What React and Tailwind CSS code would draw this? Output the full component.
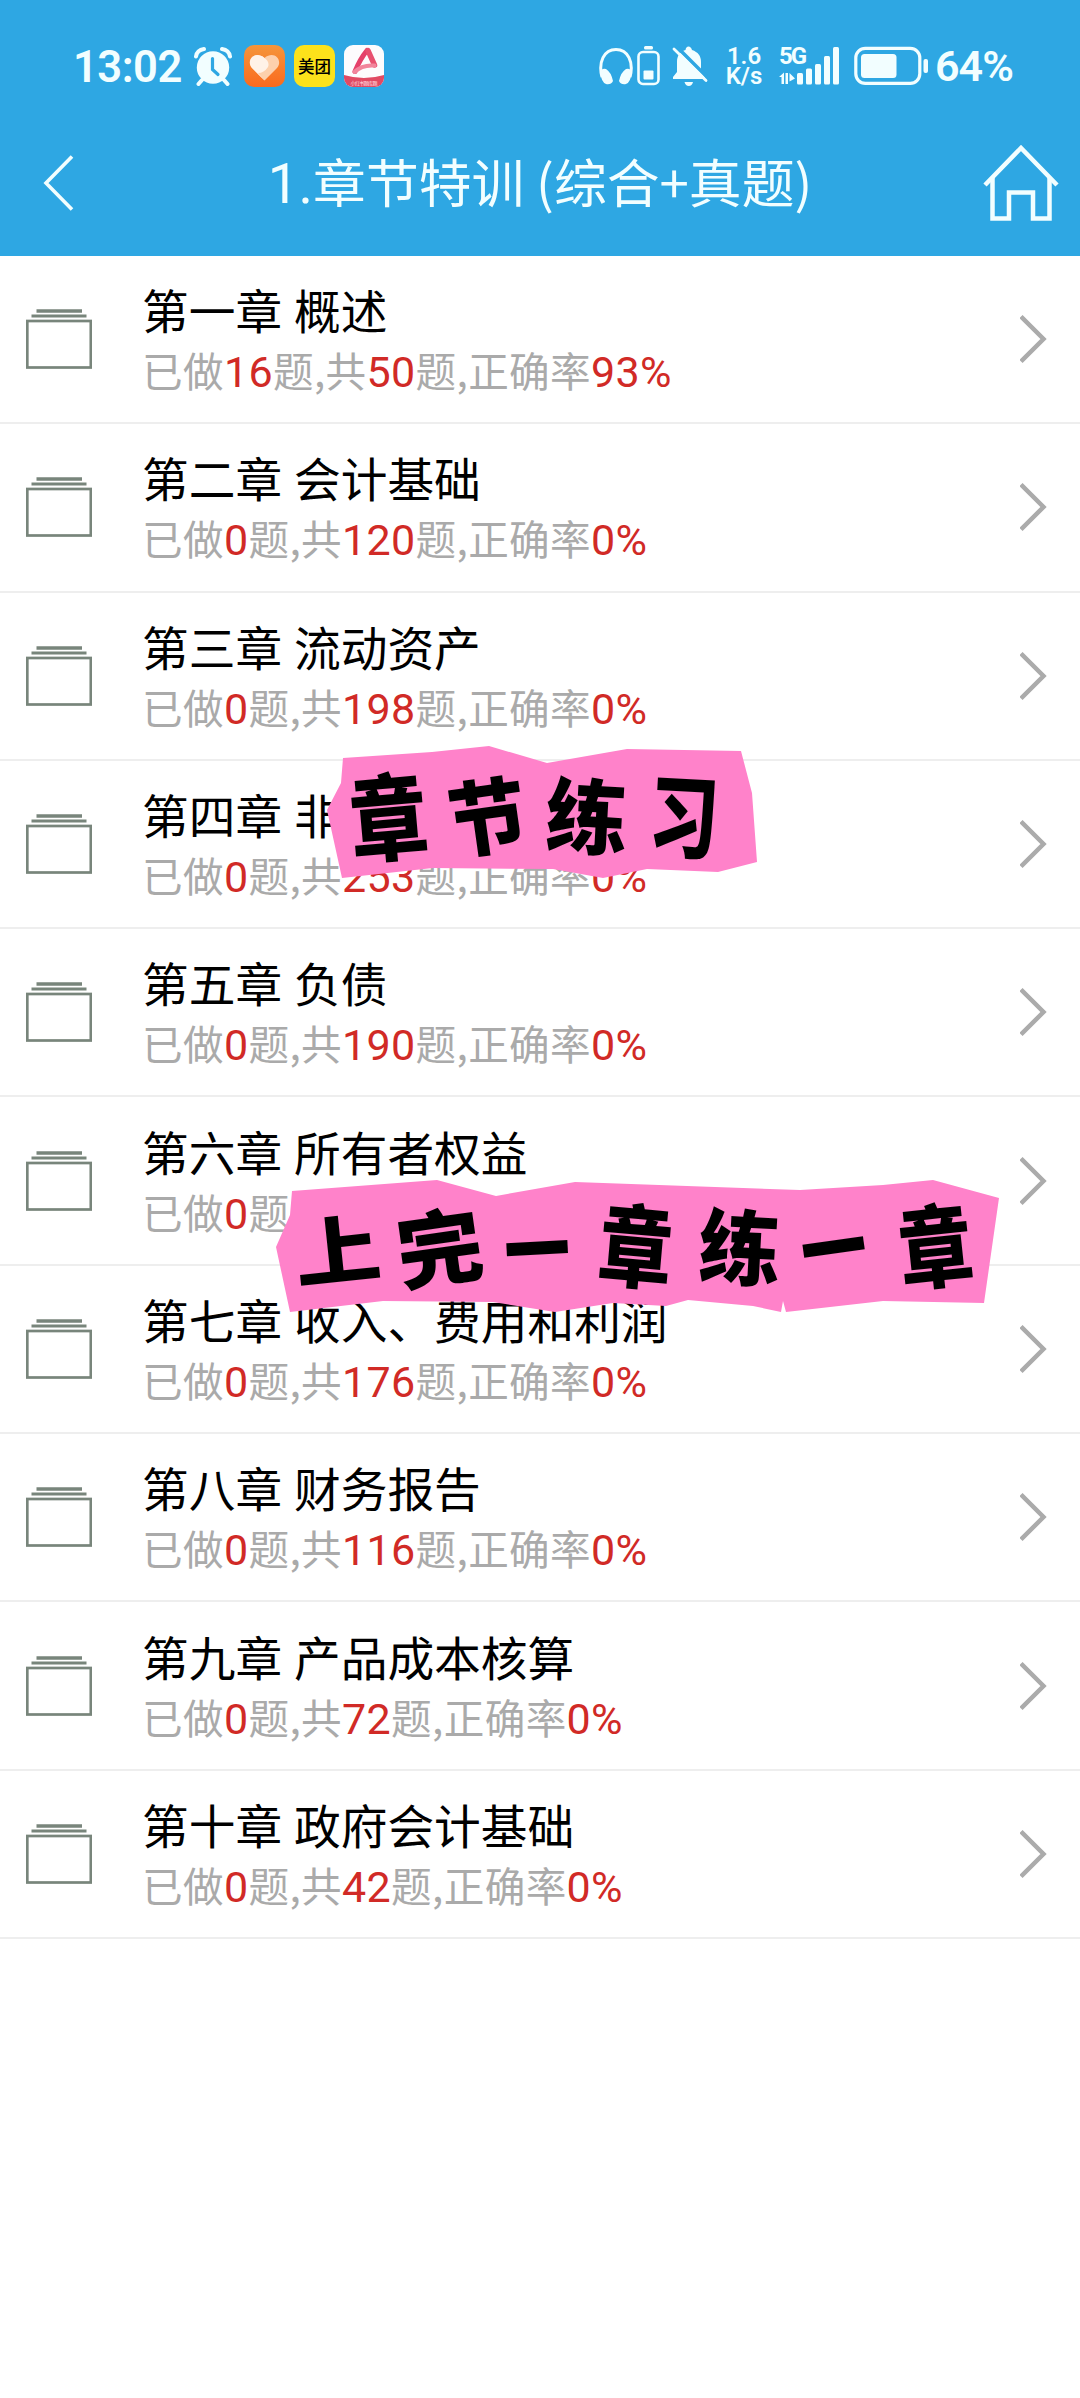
import React from 'react';

const chapters = [
    { title: '第一章 概述', done: 16, total: 50, rate: '93%' },
    { title: '第二章 会计基础', done: 0, total: 120, rate: '0%' },
    { title: '第三章 流动资产', done: 0, total: 198, rate: '0%' },
    { title: '第四章 非流动资产', done: 0, total: 253, rate: '0%' },
    { title: '第五章 负债', done: 0, total: 190, rate: '0%' },
    { title: '第六章 所有者权益', done: 0, total: 185, rate: '0%' },
    { title: '第七章 收入、费用和利润', done: 0, total: 176, rate: '0%' },
    { title: '第八章 财务报告', done: 0, total: 116, rate: '0%' },
    { title: '第九章 产品成本核算', done: 0, total: 72, rate: '0%' },
    { title: '第十章 政府会计基础', done: 0, total: 42, rate: '0%' },
];

const AlarmIcon = () => (
    <svg className="w-[38px] h-[40px]" viewBox="0 0 38 40" fill="none" stroke="currentColor">
        <circle cx="19" cy="21.500" r="16.200" fill="currentColor" stroke="none" />
        <path d="M2 10.500Q3 4 10 3M36 10.500Q35 4 28 3" strokeWidth="4" strokeLinecap="round" />
        <path d="M8 34l-3.500 4M30 34l3.500 4" strokeWidth="4" strokeLinecap="round" />
        <path d="M18.500 12.500v11l5.500 5" stroke="#2ea7e3" strokeWidth="3.200" strokeLinecap="round" />
    </svg>
);

const HeartAppIcon = () => (
    <svg className="w-[41px] h-[42px]" viewBox="0 0 41 42">
        <defs>
            <linearGradient id="heartBg" x1="0" y1="0" x2="0" y2="1">
                <stop offset="0" stopColor="#f5953a" />
                <stop offset="1" stopColor="#fa6a1e" />
            </linearGradient>
        </defs>
        <rect width="41" height="42" rx="10" fill="url(#heartBg)" />
        <path d="M20.500 35.500L8 23C1.500 15 11 5 20.500 13C30 5 39.500 15 33 23Z" fill="#fdd0ac" />
        <path d="M20.500 35.500L8 23C1.500 15 11 5 20.500 13Q26 17 24 22Q20 28 14 28Z" fill="#fff2e8" />
    </svg>
);

const AAppIcon = () => (
    <svg className="w-[40px] h-[42px]" viewBox="0 0 40 42">
        <defs>
            <clipPath id="aClip"><rect width="40" height="42" rx="9" /></clipPath>
        </defs>
        <g clipPath="url(#aClip)">
            <rect width="40" height="42" fill="#fdfcfd" />
            <path d="M0 30Q20 36 40 30V42H0Z" fill="#e14a63" />
        </g>
        <path d="M23 5.500Q16 14 11 26.500" stroke="#e5416a" strokeWidth="5" strokeLinecap="round" fill="none" />
        <path d="M24 5.500L30.500 20" stroke="#e8506f" strokeWidth="5.500" strokeLinecap="round" />
        <path d="M10.500 27Q18 19.500 30.500 20.500" stroke="#f2859c" strokeWidth="4" strokeLinecap="round" fill="none" />
        <text x="20" y="39.500" textAnchor="middle" fontSize="5" fill="#ffe3e8" textLength="27">小红书题库题</text>
    </svg>
);

const HeadphonesIcon = () => (
    <svg className="w-[34px] h-[38px]" viewBox="0 0 34 38" fill="none" stroke="currentColor">
        <path d="M3 30C-1 15 5 2.500 17 2.500S35 15 31 30" strokeWidth="3" />
        <path d="M1.500 25Q3 20.500 7 22Q12 25 14 34Q12 38 7 37Q2 35 1.500 25ZM32.500 25Q31 20.500 27 22Q22 25 20 34Q22 38 27 37Q32 35 32.500 25Z" fill="currentColor" stroke="none" />
    </svg>
);

const SmallBatteryIcon = () => (
    <svg className="w-[23px] h-[40px]" viewBox="0 0 23 40">
        <rect x="7" y="0" width="9" height="3.500" rx="1.500" fill="currentColor" />
        <rect x="1.500" y="6" width="20" height="32" rx="4.500" fill="none" stroke="currentColor" strokeWidth="2.600" />
        <rect x="6.500" y="24.500" width="10" height="9" rx="1" fill="currentColor" />
    </svg>
);

const BellOffIcon = () => (
    <svg className="w-[36px] h-[40px]" viewBox="0 0 36 40">
        <path d="M13.500 4Q14 .5 16.500 .5T20 4C26 6 29 10 29 16V24L33 32V33H1V31L5 26V16C5 10 7.500 6 13.500 4Z" fill="currentColor" />
        <path d="M12.500 36H21Q20 40 16.800 40T12.500 36Z" fill="currentColor" />
        <path d="M4 0L37 33" stroke="#2ea7e3" strokeWidth="3.500" />
        <path d="M2 3L34 34.500" stroke="currentColor" strokeWidth="2.800" strokeLinecap="round" />
    </svg>
);

const SignalIcon = () => (
    <div className="relative w-[62px] h-[40px]">
        <span className="absolute left-0 top-0 font-[Roboto] text-[24px] leading-[20px] font-bold tracking-[-2px]">5G</span>
        <svg className="w-[62px] h-[40px]" viewBox="0 0 62 40" fill="currentColor">
            <path d="M0 31L5 26.500V38H2.500V31ZM6.500 27H9V38H6.500ZM10.500 27L16 32.500L10.500 35.500Z" />
            <rect x="18" y="27" width="6" height="11.500" rx="1.500" />
            <rect x="27" y="22.500" width="6" height="16" rx="1.500" />
            <rect x="36" y="18" width="6" height="20.500" rx="1.500" />
            <rect x="45" y="10" width="6" height="28.500" rx="1.500" />
            <rect x="54" y="1" width="6" height="37.500" rx="1.500" />
        </svg>
    </div>
);

const BatteryIcon = () => (
    <svg className="w-[75px] h-[40px]" viewBox="0 0 75 40">
        <rect x="1.800" y="2.300" width="64" height="35" rx="9.500" fill="none" stroke="currentColor" strokeWidth="3.200" />
        <rect x="7" y="8" width="35.500" height="24" rx="3.500" fill="currentColor" />
        <rect x="69.500" y="13" width="4.500" height="14" rx="2" fill="currentColor" />
    </svg>
);

const HomeIcon = () => (
    <svg className="w-[76px] h-[78px]" viewBox="0 0 76 78" fill="none" stroke="currentColor" strokeWidth="4.500">
        <path d="M2 41L38 4L74 41" />
        <path d="M9.500 34V74.500H26V48.500H50V74.500H66.500V34" />
    </svg>
);

const FolderIcon = () => (
    <svg className="w-[66px] h-[60px]" viewBox="0 0 66 60" fill="none" stroke="#78857b">
        <path d="M10.500 2H56" strokeWidth="3.500" />
        <path d="M5.500 7H60.500" strokeWidth="2.800" />
        <rect x="1.300" y="12" width="63.500" height="46.500" strokeWidth="2.700" />
    </svg>
);

const StatusBar = () => (
    <div className="flex items-center h-[88px] pl-[73px] pt-[44px]">
        <span className="w-[121px] pt-[3px] font-[Roboto] text-[43.5px] leading-none font-semibold tracking-[-0.5px]">13:02</span>
        <AlarmIcon />
        <div className="flex items-center gap-[9px] ml-[12px]">
            <HeartAppIcon />
            <div className="w-[41px] h-[42px] rounded-[10px] bg-[#fde21b] text-black flex items-center justify-center text-[16.5px] font-medium leading-none">
                美团
            </div>
            <AAppIcon />
        </div>
        <div className="flex items-center ml-[215px]">
            <HeadphonesIcon />
            <div className="ml-[4px]"><SmallBatteryIcon /></div>
            <div className="ml-[12px]"><BellOffIcon /></div>
            <div className="ml-[15px] w-[42px] text-center font-[Roboto] text-[24px] leading-[20px] font-semibold">
                <div>1.6</div>
                <div>K/s</div>
            </div>
            <div className="ml-[14px]"><SignalIcon /></div>
            <div className="ml-[13px]"><BatteryIcon /></div>
            <span className="ml-[6px] pt-[1px] font-[Roboto] text-[43px] leading-none font-semibold tracking-[-1px]">64%</span>
        </div>
    </div>
);

const Num = ({ children }) => (
    <span className="font-[Roboto] text-[43px] leading-none text-[#d12a26] tracking-[0.3px]">{children}</span>
);

const ChapterRow = ({ title, done, total, rate }) => (
    <li className="flex items-center h-[168.3px] border-b-[2.5px] border-[#eeeeee] pl-[26px] pr-[32px]">
        <FolderIcon />
        <div className="ml-[50px] flex-1 whitespace-nowrap">
            <div className="text-[46.7px] leading-[61px] text-black [word-spacing:1.5px]">{title}</div>
            <div className="h-[61px] text-[40.6px] leading-[61px] text-[#aaaaaa] tracking-[0.4px]">
                已做<Num>{done}</Num>题,共<Num>{total}</Num>题,正确率<Num>{rate}</Num>
            </div>
        </div>
        <svg className="w-[28px] h-[50px]" viewBox="0 0 28 50" fill="none" stroke="#ababab" strokeWidth="4.500">
            <path d="M1 2.500L23.500 25L1 47.500" />
        </svg>
    </li>
);

// cut-paper labels, one entry per hand-placed letter
const Sticker = ({ points, viewBox, letters, className, textClass }) => (
    <div className={className}>
        <svg className="absolute inset-0 w-full h-full" viewBox={viewBox}>
            <polygon points={points} fill="#ff82ca" />
        </svg>
        <div className={textClass}>
            {letters.map(([char, tilt], i) => (
                <span key={i} className="w-[98.5px] text-center">
                    <span className={`inline-block ${tilt}`}>{char}</span>
                </span>
            ))}
        </div>
    </div>
);

export default function App() {
    return (
        <div
            lang="zh-CN"
            className="relative w-[1080px] h-[2398px] overflow-hidden bg-white font-['Noto_Sans_CJK_SC',sans-serif]"
        >
            <header className="h-[256px] bg-[#2ea7e3] text-[#f2feff]">
                <StatusBar />
                <div className="flex items-center h-[168px] pt-[22px] pl-[43px] pr-[21px]">
                    <svg className="w-[76px] h-[56px]" viewBox="0 0 76 56" fill="none" stroke="currentColor" strokeWidth="3.600">
                        <path d="M29 1.500L3 28L29 54.500" />
                    </svg>
                    <h1 className="flex-1 pr-[22px] pb-[4px] text-center text-[52.8px] leading-[60px] font-normal whitespace-nowrap">
                        <span className="font-[Roboto] text-[55px] leading-none">1.</span>章节特训 (综合+真题)
                    </h1>
                    <HomeIcon />
                </div>
            </header>

            <ul>
                {chapters.map(chapter => (
                    <ChapterRow key={chapter.title} {...chapter} />
                ))}
            </ul>

            <Sticker
                className="absolute left-[326px] top-[746px] w-[432px] h-[133px]"
                viewBox="326 746 432 133"
                points="343,758 432,752 489,746 547,763 627,749 741,751 752,793 757,862 718,872 647,869 603,878 553,869 433,868 342,878 327,810 341,783"
                textClass="relative flex pl-[13px] pt-[4px] text-[82px] leading-[126px] font-black text-black"
                letters={[
                    ['章', '-rotate-5 scale-y-115 scale-x-95'],
                    ['节', '-rotate-8 scale-x-95'],
                    ['练', 'rotate-3 translate-x-[2px]'],
                    ['习', 'rotate-3 scale-x-85 scale-y-110'],
                ]}
            />
            <Sticker
                className="absolute left-[276px] top-[1179px] w-[724px] h-[134px]"
                viewBox="276 1179 724 134"
                points="292,1191 437,1180 496,1196 575,1182 800,1190 883,1185 933,1180 999,1198 984,1303 883,1301 786,1312 783,1301 781,1312 753,1306 688,1300 666,1306 613,1303 555,1312 493,1302 383,1301 290,1312 276,1247 290,1215"
                textClass="relative flex pl-[15px] text-[82px] leading-[126px] font-black text-black"
                letters={[
                    ['上', '-rotate-6 scale-y-90 scale-x-105 -translate-x-[3px] translate-y-[5px]'],
                    ['完', '-rotate-8 scale-x-105 translate-y-[2px]'],
                    ['一', '-rotate-3 scale-x-80 translate-y-[3px]'],
                    ['章', 'rotate-5 scale-y-110 scale-x-90'],
                    ['练', 'rotate-3 translate-x-[6px] translate-y-[2px]'],
                    ['一', '-rotate-8 scale-x-80 translate-y-[2px]'],
                    ['章', '-rotate-6 scale-y-110 scale-x-90 translate-x-[4px]'],
                ]}
            />
        </div>
    );
}
